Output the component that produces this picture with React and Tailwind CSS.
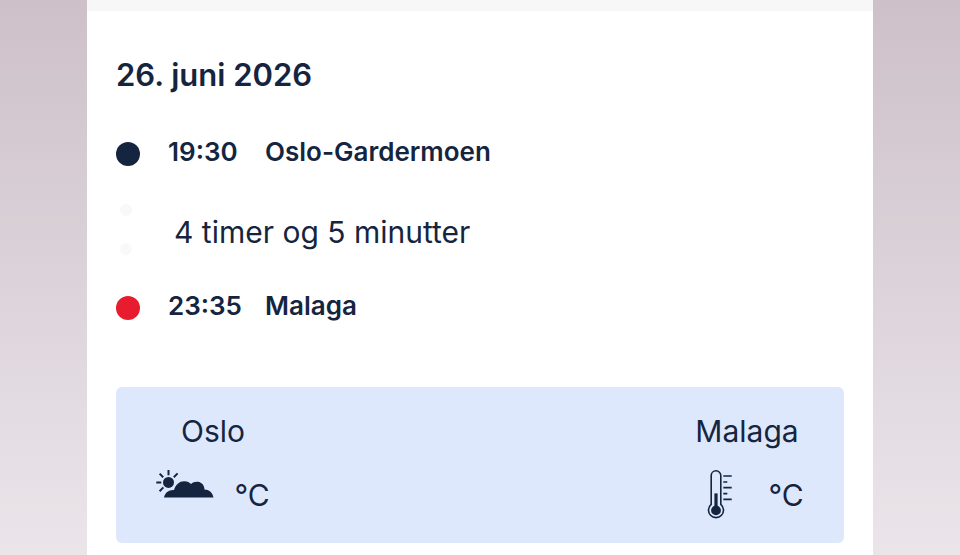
import React from "react"

const stops = {
  departure: { time: "19:30", place: "Oslo-Gardermoen", dot: "bg-[#15253f]" },
  arrival: { time: "23:35", place: "Malaga", dot: "bg-[#e71d2f]" },
}

function Stop({ stop }) {
  return (
    <li className="flex items-center text-[26px] leading-9 font-semibold">
      <span className={`mt-1 mr-7 size-6 rounded-full ${stop.dot}`} />
      <time className="w-[97px]">{stop.time}</time>
      <span>{stop.place}</span>
    </li>
  )
}

function PartlyCloudy() {
  return (
    <svg viewBox="0 0 58 50" className="h-[50px] w-[58px]" fill="currentColor" aria-hidden="true">
      <circle cx="12.5" cy="12.4" r="5.5" />
      <path
        d="M12.5 0v5.2M0.3 12.4h5M3.6 3.6l3.6 3.6M21.6 3.4l-3.8 3.8M3.6 21.2l3.8-3.8"
        fill="none"
        stroke="currentColor"
        strokeWidth="2"
      />
      <path
        d="M8 27.5C9 22.5 13 19.6 18 20C19.5 14.5 23.5 11 28.5 11.2C31.5 11.3 33.5 12.4 35 14C37 12.3 39.3 11.4 42 11.8C46 12.4 48.4 15.5 48.5 19.6C53 19.7 56.5 22.5 57.5 27.5Z"
        stroke="#dde8fd"
        strokeWidth="1"
        paintOrder="stroke"
      />
    </svg>
  )
}

function Thermometer() {
  return (
    <svg viewBox="0 0 58 50" className="h-[50px] w-[58px]" fill="none" stroke="currentColor" aria-hidden="true">
      <path
        d="M21.2 34.4V5.6a4.8 4.8 0 0 1 9.6 0v28.8a7.5 7.5 0 1 1-9.6 0Z"
        strokeWidth="1.6"
      />
      <circle cx="26" cy="40.4" r="4.9" fill="currentColor" stroke="none" />
      <path d="M26 40V23.4" strokeWidth="3.2" />
      <path d="M33.3 6h8.4M33.3 12h4M33.3 17.7h8.4M33.3 23.6h4M33.3 29.3h8.4" strokeWidth="1.7" />
    </svg>
  )
}

function CityWeather({ city, icon }) {
  return (
    <div className="flex w-[194px] flex-col items-center">
      <h3 className="leading-10">{city}</h3>
      <div className="mt-[19px] flex items-center gap-5">
        {icon}
        <span>°C</span>
      </div>
    </div>
  )
}

export default function App() {
  return (
    <div className="min-h-screen bg-linear-to-b from-[#cec0c9] via-[#dbd3d9] to-[#ebe5ea] px-[87px] font-['Inter',sans-serif] text-[#15253f]">
      <main className="min-h-screen bg-white">
        <div className="h-[11px] bg-[#f7f7f7]" />
        <div className="px-[29px] pt-11 pb-3">
          <h2 className="text-[31px] leading-10 font-semibold">26. juni 2026</h2>
          <ul className="mt-[39px] flex flex-col gap-8">
            <Stop stop={stops.departure} />
            <li className="flex items-center gap-[42px] text-[30px]">
              <span className="ml-1 flex flex-col gap-[27px]">
                <span className="size-3 rounded-full bg-[#f9f9f9]" />
                <span className="size-3 rounded-full bg-[#f9f9f9]" />
              </span>
              <span className="pt-1.5 leading-12">4 timer og 5 minutter</span>
            </li>
            <Stop stop={stops.arrival} />
          </ul>
          <section className="mt-[63px] flex justify-between rounded-md bg-[#dde8fd] pt-6 pb-[23px] text-[30px]">
            <CityWeather city="Oslo" icon={<PartlyCloudy />} />
            <CityWeather city="Malaga" icon={<Thermometer />} />
          </section>
        </div>
      </main>
    </div>
  )
}
